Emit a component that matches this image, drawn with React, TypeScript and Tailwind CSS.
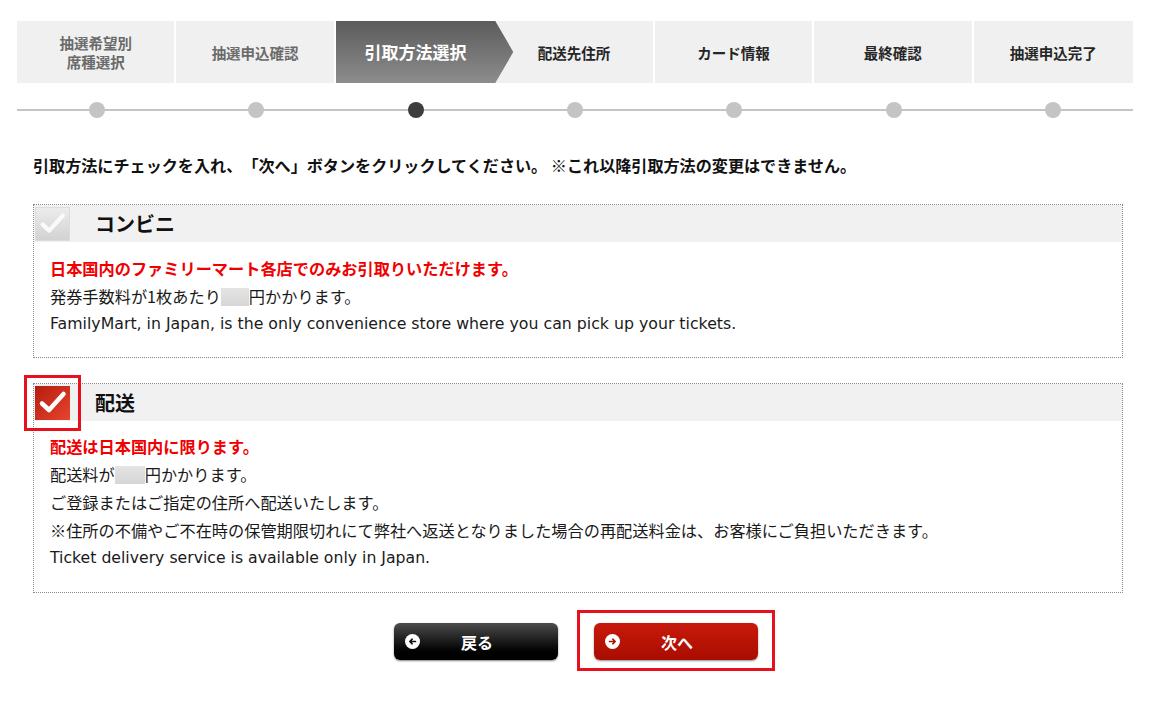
import React from 'react';

const steps = [
  { label: ['抽選希望別', '席種選択'], state: 'done' },
  { label: ['抽選申込確認'], state: 'done' },
  { label: ['引取方法選択'], state: 'active' },
  { label: ['配送先住所'], state: 'todo' },
  { label: ['カード情報'], state: 'todo' },
  { label: ['最終確認'], state: 'todo' },
  { label: ['抽選申込完了'], state: 'todo' },
];

const CheckMark: React.FC<{ color?: string }> = ({ color = '#fff' }) => (
  <svg width="35" height="35" viewBox="0 0 35 35">
    <path d="M7 18.5 L14 25 L28.5 9" fill="none" stroke={color} strokeWidth="4.5" strokeLinecap="round" strokeLinejoin="round" />
  </svg>
);

const Placeholder: React.FC<{ w: string }> = ({ w }) => (
  <span className={`inline-block ${w} h-[18px] align-[-3px] bg-gradient-to-b from-[#e4e4e4] to-[#d6d6d6]`} />
);

const StepBar: React.FC = () => (
  <div className="ml-[17px] w-[1116px]">
    <div className="grid grid-cols-7 h-[62px]">
      {steps.map((s, i) => {
        if (s.state === 'active') {
          return (
            <div
              key={i}
              className="relative z-10 mr-[-18px] flex items-center justify-center pr-[18px] bg-gradient-to-b from-[#5c5c5c] to-[#8d8d8d] text-white text-[17px] font-bold [clip-path:polygon(0_0,calc(100%-18px)_0,100%_50%,calc(100%-18px)_100%,0_100%)]"
            >
              {s.label[0]}
            </div>
          );
        }
        return (
          <div
            key={i}
            className={`flex flex-col items-center justify-center bg-[#f0f0f0] text-[14.5px] font-bold leading-[19px] ${i < 6 ? 'border-r-2 border-white' : ''} ${s.state === 'done' ? 'text-[#6a6a6a]' : 'text-[#262626]'}`}
          >
            {s.label.map((l) => (
              <span key={l}>{l}</span>
            ))}
          </div>
        );
      })}
    </div>
    <div className="mt-[19px] grid grid-cols-7 h-4 bg-[linear-gradient(#c4c4c4,#c4c4c4)] bg-no-repeat bg-[length:100%_2px] bg-center">
      {steps.map((s, i) => (
        <div key={i} className="flex justify-center">
          <span className={`block w-4 h-4 rounded-full ${s.state === 'active' ? 'bg-[#3d3d3d]' : 'bg-[#c4c4c4]'}`} />
        </div>
      ))}
    </div>
  </div>
);

const OptionBox: React.FC<{
  title: string;
  checked?: boolean;
  children: React.ReactNode;
}> = ({ title, checked, children }) => (
  <div className="border border-dotted border-[#8a8a8a] bg-white">
    <div className="flex items-center h-[37px] bg-[#f1f1f1] pl-[1px]">
      <div className="relative">
        <div
          className={`w-[35px] h-[34px] flex items-center justify-center ${
            checked
              ? 'bg-gradient-to-br from-[#b51a0e] to-[#e8442f]'
              : 'bg-gradient-to-b from-[#ececec] to-[#d2d2d2] border border-[#dcdcdc]'
          }`}
        >
          <CheckMark color={checked ? '#ffffff' : '#fafafa'} />
        </div>
        {checked && (
          <span className="absolute -left-[11px] -top-[11px] w-[57px] h-[56px] border-[3px] border-[#e8101c]" />
        )}
      </div>
      <span className="ml-[25px] text-[20px] font-bold text-[#111]">{title}</span>
    </div>
    <div className="pl-[16px] text-[16.2px] leading-[28px] text-[#1a1a1a]">{children}</div>
  </div>
);

const ArrowIcon: React.FC<{ dir: 'left' | 'right'; color: string }> = ({ dir, color }) => (
  <svg width="15" height="15" viewBox="0 0 15 15">
    <circle cx="7.5" cy="7.5" r="7.5" fill="#fff" />
    {dir === 'left' ? (
      <path d="M10.5 7.5 H5 M7.2 5.2 L4.8 7.5 L7.2 9.8" fill="none" stroke={color} strokeWidth="1.6" strokeLinecap="round" strokeLinejoin="round" />
    ) : (
      <path d="M4.5 7.5 H10 M7.8 5.2 L10.2 7.5 L7.8 9.8" fill="none" stroke={color} strokeWidth="1.6" strokeLinecap="round" strokeLinejoin="round" />
    )}
  </svg>
);

export default function App() {
  return (
    <div className="w-[1156px] h-[715px] bg-white pt-[21px] font-['Noto_Sans_CJK_JP','Noto_Sans',sans-serif] text-[#111] [text-spacing-trim:space-all]">
      <StepBar />

      <div className="ml-[33px] w-[1090px]">
        <p className="mt-[35px] text-[16.1px] font-bold leading-[24px] text-[#111]">
          引取方法にチェックを入れ、「次へ」ボタンをクリックしてください。 ※これ以降引取方法の変更はできません。
        </p>

        <div className="mt-[27px]">
          <OptionBox title="コンビニ">
            <div className="pt-[12px] pb-[19px]">
              <p className="font-bold text-[#f00000]">日本国内のファミリーマート各店でのみお引取りいただけます。</p>
              <p>
                発券手数料が1枚あたり
                <Placeholder w="w-[28px]" />
                円かかります。
              </p>
              <p className="font-['DejaVu_Sans',sans-serif] text-[15.75px]">
                FamilyMart, in Japan, is the only convenience store where you can pick up your tickets.
              </p>
            </div>
          </OptionBox>
        </div>

        <div className="mt-[25px]">
          <OptionBox title="配送" checked>
            <div className="pt-[11px] pb-[20px]">
              <p className="font-bold text-[#f00000]">配送は日本国内に限ります。</p>
              <p>
                配送料が
                <Placeholder w="w-[30px]" />
                円かかります。
              </p>
              <p>ご登録またはご指定の住所へ配送いたします。</p>
              <p>※住所の不備やご不在時の保管期限切れにて弊社へ返送となりました場合の再配送料金は、お客様にご負担いただきます。</p>
              <p className="font-['DejaVu_Sans',sans-serif] text-[15.7px]">Ticket delivery service is available only in Japan.</p>
            </div>
          </OptionBox>
        </div>
      </div>

      <div className="mt-[30px] flex justify-center gap-[36px] pr-[4px]">
        <button className="flex items-center w-[164px] h-[37px] rounded-[6px] bg-gradient-to-b from-[#4e4e4e] via-[#1a1a1a] to-[#000] shadow-[0_1px_2px_rgba(0,0,0,0.5)] pl-[11px] text-white">
          <ArrowIcon dir="left" color="#111" />
          <span className="flex-1 pr-[24px] text-[16px] font-bold">戻る</span>
        </button>
        <div className="relative">
          <button className="flex items-center w-[164px] h-[37px] rounded-[6px] bg-gradient-to-b from-[#c81a0c] to-[#a80c00] shadow-[0_1px_2px_rgba(0,0,0,0.45)] pl-[11px] text-white">
            <ArrowIcon dir="right" color="#b01000" />
            <span className="flex-1 pr-[24px] text-[16px] font-bold">次へ</span>
          </button>
          <span className="absolute -left-[17px] -top-[13px] -right-[17px] -bottom-[11px] border-[3px] border-[#e8101c]" />
        </div>
      </div>
    </div>
  );
}
